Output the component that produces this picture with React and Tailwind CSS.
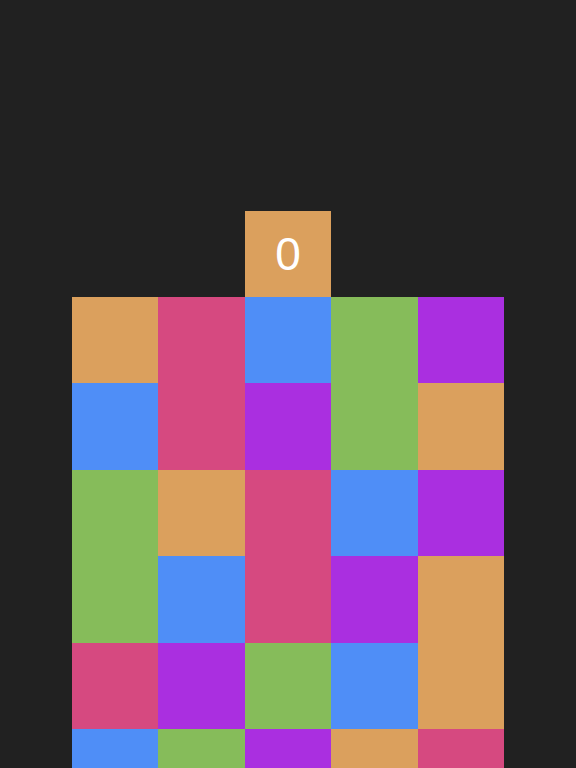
import React from "react";

const COLORS = {
  o: "bg-[#dba05d]",
  p: "bg-[#d64980]",
  b: "bg-[#4f8ef7]",
  g: "bg-[#86bc5a]",
  v: "bg-[#aa2fe0]",
};

const BOARD = [
  ["o", "p", "b", "g", "v"],
  ["b", "p", "v", "g", "o"],
  ["g", "o", "p", "b", "v"],
  ["g", "b", "p", "v", "o"],
  ["p", "v", "g", "b", "o"],
  ["b", "g", "v", "o", "p"],
];

export default function App() {
  return (
    <div className="h-[768px] w-full overflow-hidden bg-[#212121] flex flex-col items-center">
      <div className="h-[210.6px] shrink-0" />
      {/* Current piece */}
      <div className="w-[86.4px] h-[86.4px] shrink-0 bg-[#dba05d] flex items-center justify-center">
        <span className="text-white text-[46px] leading-none font-['Liberation_Sans',sans-serif]">
          0
        </span>
      </div>
      {/* Board */}
      <div className="w-[432px] shrink-0 grid grid-cols-5">
        {BOARD.flat().map((c, i) => (
          <div key={i} className={`h-[86.4px] ${COLORS[c]}`} />
        ))}
      </div>
    </div>
  );
}
